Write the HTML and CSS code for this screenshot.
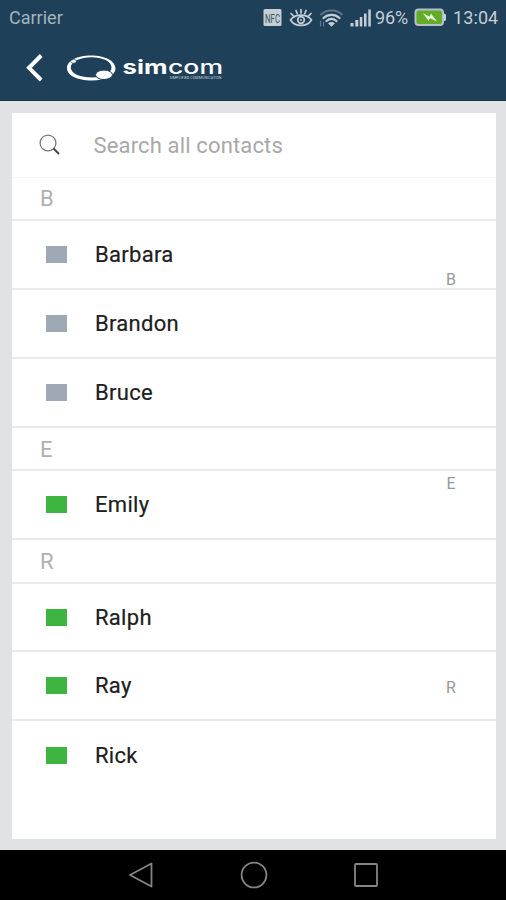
FILE: index.html
```html
<!DOCTYPE html>
<html lang="en">
<head>
<meta charset="utf-8">
<title>Contacts</title>
<link rel="stylesheet" href="styles.css">
</head>
<body>
<div class="phone">
  <header class="header">
    <div class="status">
      <span class="carrier">Carrier</span>
      <svg class="status-icons" width="110" height="22" viewBox="262 7 110 22">
        <rect x="263.5" y="9" width="18" height="17" rx="1.5" fill="#c5ced6"/>
        <text class="nfc" x="265" y="22.5" textLength="15" lengthAdjust="spacingAndGlyphs">NFC</text>
        <g fill="none" stroke="#c5ced6" stroke-width="1.7" stroke-linecap="round">
          <path d="M290.500 20C295 13.500 307 13.500 311.500 20C307 27.300 295 27.300 290.500 20Z"/>
          <circle cx="301" cy="20" r="3.300"/>
          <path d="M291 13.500L293.500 16M296 10.500L297.200 13.500M301 9.500V13M306 10.500L304.800 13.500M311 13.500L308.500 16"/>
          <path d="M321 14.500C327 9 336 9 342 14.500" stroke="#637b8f"/>
          <path d="M323.500 18C328 13.800 335 13.800 339.500 18M326.500 21C329.500 18.500 333.500 18.500 336.500 21" stroke-width="2.200"/>
          <path d="M320.500 21V26M323.500 22V26" stroke="#637b8f" stroke-width="1.200"/>
        </g>
        <circle cx="301" cy="20" r="1" fill="#c5ced6"/>
        <path d="M328 23.200Q331.500 21 335 23.200L331.500 26.800Z" fill="#c5ced6"/>
        <path d="M350.500 23h3v3.500h-3zM355.300 20h3v6.500h-3zM359.800 17h2.500v9.500h-2.500zM364 13.500h2.500v13h-2.500zM368.300 9.500h2.500v17h-2.500z" fill="#c5ced6"/>
      </svg>
      <span class="percent">96%</span>
      <svg class="battery" width="33" height="19" viewBox="0 0 33 19">
        <rect x="1.500" y="1.500" width="27.500" height="15.500" rx="3" fill="#62ac26" stroke="#b9bfd0" stroke-width="2"/>
        <path d="M30 5.500q2 0 2 1.500v4.500q0 1.500-2 1.500z" fill="#c5ced6"/>
        <path d="M8.500 5L15.500 8.500L17 5.500L23 13.500L16 10.300L14.500 12.800Z" fill="#e5eddc"/>
      </svg>
      <span class="clock">13:04</span>
    </div>
    <div class="brand">
      <svg width="230" height="40" viewBox="0 48 230 40">
        <path d="M41.200 55.500L29 67.800L41.200 80" fill="none" stroke="#fff" stroke-width="4"/>
        <path fill="#fff" fill-rule="evenodd" d="M91 55.500C105 55.500 115.500 61 115.500 68.500C115.500 75.500 106 80.500 92 80.500C77 80.500 67 75.500 67 68C67 61 77 55.500 91 55.500ZM91.500 57.300C80.500 57.300 70.800 61.500 70.800 67.500C70.800 74 81 77.500 92 77.500C103 77.500 111.500 73.500 111.500 67.500C111.500 61.500 102.500 57.300 91.500 57.300Z"/>
        <ellipse cx="104" cy="74.800" rx="8.500" ry="4.700" fill="#fff" stroke="#1f4059" stroke-width="1"/>
        <ellipse cx="73.500" cy="61.300" rx="2.800" ry="1.900" fill="#fff" stroke="#1f4059" stroke-width=".6"/>
        <text class="logo logo-bold" x="122.500" y="73.500" textLength="45" lengthAdjust="spacingAndGlyphs">sim</text>
        <text class="logo" x="168" y="73.500" textLength="55" lengthAdjust="spacingAndGlyphs">com</text>
        <text class="tagline" x="169.500" y="79" textLength="52" lengthAdjust="spacingAndGlyphs">SIMPLIFIED COMMUNICATION</text>
      </svg>
    </div>
  </header>

  <main class="content">
    <div class="card">
      <div class="search">
        <svg class="search-icon" width="22" height="22" viewBox="0 0 22 22" fill="none">
          <circle cx="9" cy="9" r="7.900" stroke="#777" stroke-width="1.300"/>
          <path d="M14.500 14.500L20 20" stroke="#444" stroke-width="1.900"/>
        </svg>
        <span>Search all contacts</span>
      </div>
      <div class="section first">B</div>
      <div class="row"><i class="flag"></i>Barbara</div>
      <div class="row"><i class="flag"></i>Brandon</div>
      <div class="row"><i class="flag"></i>Bruce</div>
      <div class="section">E</div>
      <div class="row"><i class="flag online"></i>Emily</div>
      <div class="section">R</div>
      <div class="row"><i class="flag online"></i>Ralph</div>
      <div class="row"><i class="flag online"></i>Ray</div>
      <div class="row last"><i class="flag online"></i>Rick</div>
      <nav class="index"><span>B</span><span>E</span><span>R</span></nav>
    </div>
  </main>

  <footer class="navbar">
    <svg width="28" height="28" viewBox="0 0 28 28"><path d="M24.500 2.500V25.500L3 14Z"/></svg>
    <svg width="28" height="28" viewBox="0 0 28 28"><circle cx="14" cy="14" r="12.400"/></svg>
    <svg width="28" height="28" viewBox="0 0 28 28"><rect x="3" y="3" width="22" height="22" rx="1"/></svg>
  </footer>
</div>
</body>
</html>
```
FILE: styles.css
```css
* { box-sizing: border-box; }
body { margin: 0; font-family: Roboto, "Liberation Sans", sans-serif; }
svg { display: block; flex: none; }
.phone { width: 506px; height: 900px; display: flex; flex-direction: column; overflow: hidden; }

.header { height: 101px; background: #1f4059; border-bottom: 1px solid #183449; flex: none; }
.status { height: 35px; display: flex; align-items: center; padding: 0 8px 0 9px; color: #c5ced6; font-size: 18px; white-space: nowrap; }
.carrier { color: #a5b3bf; letter-spacing: 0; margin-right: auto; }
.status-icons { margin-right: 3px; }
.percent { width: 34px; letter-spacing: -.1px; }
.battery { margin: 0 6px 0 5px; }
.clock { width: 45px; letter-spacing: .1px; }
.nfc { font-size: 12px; fill: #3b5265; }
.brand { height: 40px; margin-top: 13px; }
.logo { font-family: Inter, sans-serif; font-size: 19.500px; font-weight: 500; fill: #fff; }
.logo-bold { font-weight: 700; }
.tagline { font-size: 4px; fill: #c5ced6; }

.content { height: 749px; padding: 12px 10px 11px 12px; background: #e0e2e3; flex: none; }
.card { position: relative; height: 726px; background: #fff; }
.search { height: 64.500px; display: flex; align-items: center; border-bottom: 1px solid #f7f7f7; padding-left: 27px; font-size: 22px; color: #a8a8a8; letter-spacing: .15px; }
.search span { padding-top: 2px; }
.search-icon { margin-right: 32.500px; }
.section { height: 43.500px; border-bottom: 2px solid #e8eaeb; padding-left: 28px; font-size: 22px; line-height: 43px; color: #b0b0b0; }
.first { line-height: 41px; }
.row { height: 68.900px; border-bottom: 2px solid #e8eaeb; display: flex; align-items: center; padding-left: 34px; font-size: 22px; color: #202020; letter-spacing: .3px; -webkit-text-stroke: .2px #202020; }
.last { border-bottom: 0; }
.flag { width: 21px; height: 17px; margin-right: 28px; background: #9ea9b5; }
.online { background: #3fb541; }
.index { position: absolute; top: 157px; right: 36px; width: 18px; height: 428px; display: flex; flex-direction: column; justify-content: space-between; align-items: center; font-size: 16px; line-height: 20px; color: #999; }

.navbar { height: 50px; background: #000; display: flex; justify-content: center; align-items: center; gap: 84.500px; padding-left: 1px; }
.navbar svg { fill: none; stroke: #858585; stroke-width: 1.800; stroke-linejoin: round; }
```
